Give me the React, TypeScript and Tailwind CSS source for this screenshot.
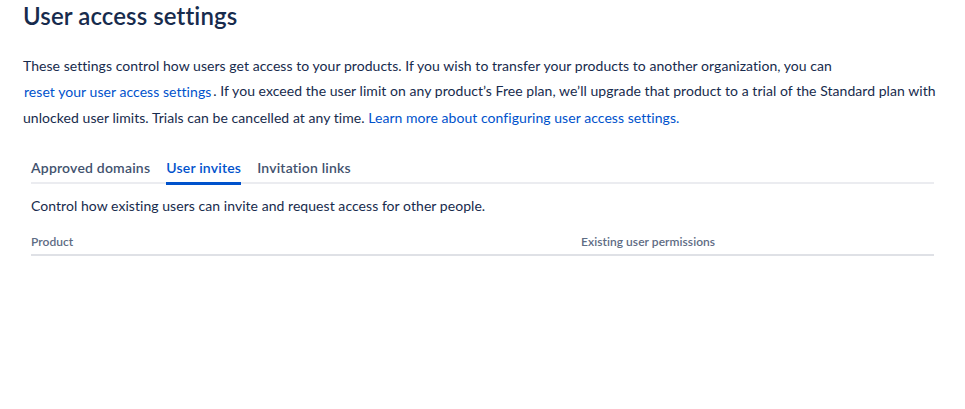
const FONT = "font-['Lato','Liberation_Sans',sans-serif]";

const TABS = ["Approved domains", "User invites", "Invitation links"];

function Tabs({ active }: { active: string }) {
  return (
    <div className="flex gap-4 border-b-2 border-[#ebecf0]">
      {TABS.map((t) => {
        const on = t === active;
        return (
          <div
            key={t}
            className={
              "relative pb-1 text-[14px] leading-5 font-semibold tracking-[0.2px] cursor-pointer " +
              (on ? "text-[#0052cc]" : "text-[#42526e]")
            }
          >
            {t}
            {on && <div className="absolute left-0 right-0 -bottom-[3px] h-[3px] bg-[#0052cc]" />}
          </div>
        );
      })}
    </div>
  );
}

export default function App() {
  return (
    <div className={`${FONT} bg-white min-h-[409px] pl-[23px] pr-[23px] pt-[2px] text-[#172b4d] tracking-[0.05px]`}>
      <h1 className="text-[24px] leading-7 font-semibold tracking-[0.1px]">User access settings</h1>

      <p className="mt-[26px] text-[14px] leading-5 pr-[6px]">
        These settings control how users get access to your products. If you wish to transfer your products to another
        organization, you can{" "}
        <span className="inline-block h-[32px] leading-[32px] align-middle -ml-[1px] px-[2px] text-[#0052cc] cursor-pointer">
          reset your user access settings
        </span>
        . If you exceed the user limit on any product’s Free plan, we’ll upgrade that product to a trial of the Standard
        plan with unlocked user limits. Trials can be cancelled at any time.{" "}
        <a className="text-[#0052cc]">Learn more about configuring user access settings.</a>
      </p>

      <div className="mx-2 mt-[30px]">
        <Tabs active="User invites" />

        <p className="mt-[12px] text-[14px] leading-5">
          Control how existing users can invite and request access for other people.
        </p>

        <div className="mt-[18px] flex border-b-2 border-[#dfe1e6] pb-[4px] text-[12px] leading-4 font-semibold text-[#5e6c84]">
          <div className="w-[550px]">Product</div>
          <div className="flex-1">Existing user permissions</div>
        </div>
      </div>
    </div>
  );
}
